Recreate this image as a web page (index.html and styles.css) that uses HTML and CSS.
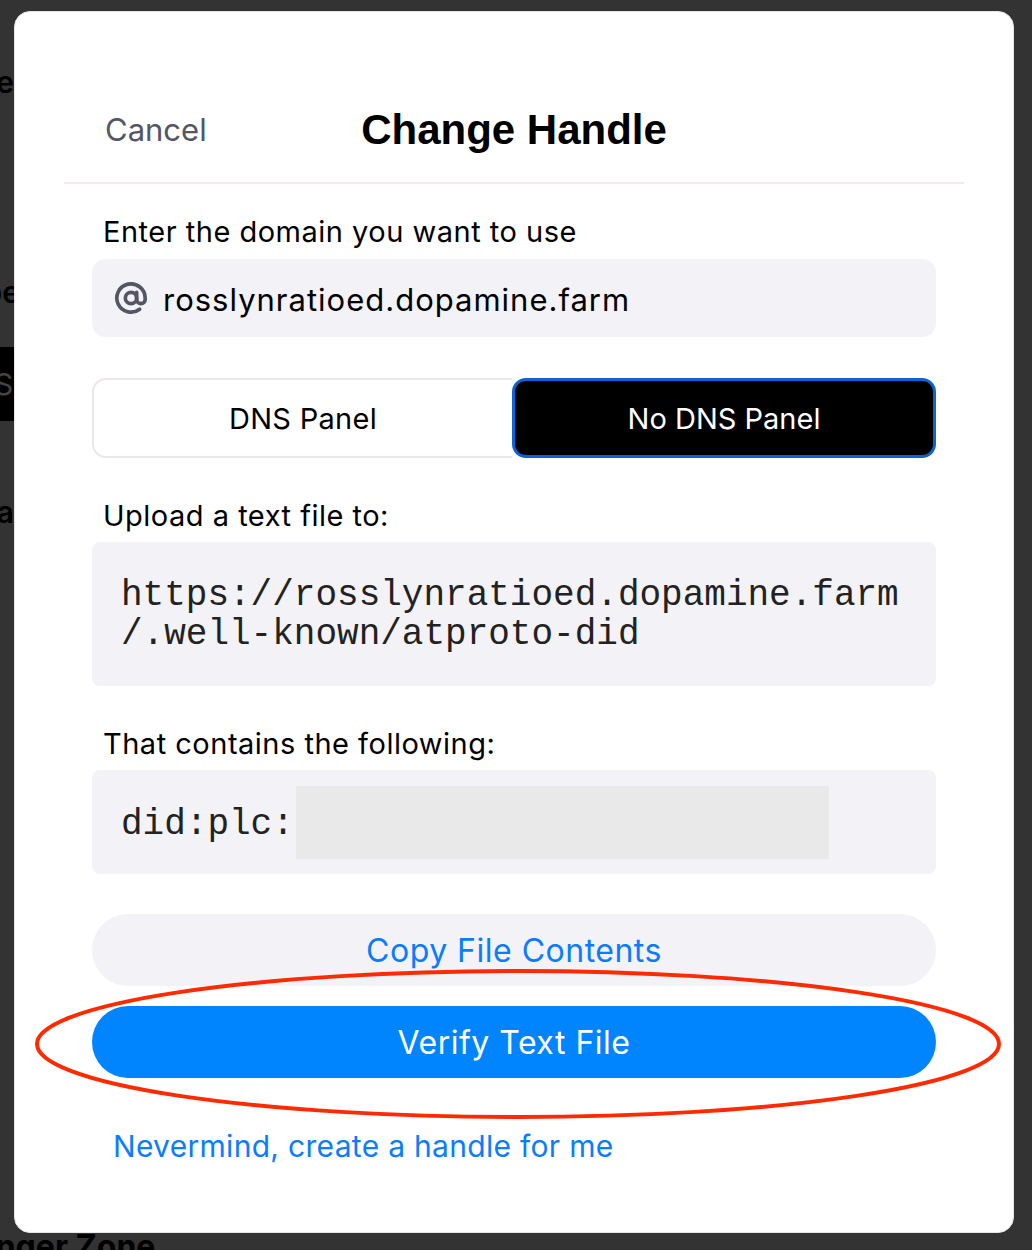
FILE: index.html
```html
<!DOCTYPE html>
<html lang="en">
<head>
<meta charset="utf-8">
<title>Change Handle</title>
<link rel="stylesheet" href="styles.css">
</head>
<body>
<div class="page">
  <div class="side">
    <div class="frag f1"><span>Handle</span></div>
    <div class="frag f2"><span>Type</span></div>
    <div class="frag dark"><span>Sy</span></div>
    <div class="frag f3"><span>Data</span></div>
  </div>
  <div class="danger">Danger Zone</div>
</div>

<div class="modal">
  <div class="header">
    <div class="cancel">Cancel</div>
    <div class="title">Change Handle</div>
    <div></div>
  </div>
  <div class="body">
    <div class="label">Enter the domain you want to use</div>
    <div class="input">
      <svg class="at" viewBox="0 0 24 24" width="34" height="34" fill="none" stroke="#545664" stroke-width="2.6" stroke-linecap="round" stroke-linejoin="round"><circle cx="12" cy="12" r="4"/><path d="M16 8v5a3 3 0 0 0 6 0v-1a10 10 0 1 0-3.92 7.94"/></svg>
      <span class="domain">rosslynratioed.dopamine.farm</span>
    </div>
    <div class="segment">
      <div class="seg seg-off">DNS Panel</div>
      <div class="seg seg-on">No DNS Panel</div>
    </div>
    <div class="label gap-lg">Upload a text file to:</div>
    <div class="code">https://rosslynratioed.dopamine.farm<br>/.well-known/atproto-did</div>
    <div class="label gap-lg">That contains the following:</div>
    <div class="code-row">
      <span class="mono">did:plc:</span>
      <span class="redact"></span>
    </div>
    <div class="btn btn-soft">Copy File Contents</div>
    <div class="btn btn-primary">Verify Text File</div>
    <div class="link">Nevermind, create a handle for me</div>
  </div>
</div>

<svg class="annot" width="1032" height="1250" viewBox="0 0 1032 1250"><ellipse cx="518" cy="1044" rx="481" ry="73" fill="none" stroke="#ff2a00" stroke-width="4"/></svg>
</body>
</html>
```

FILE: styles.css
```css
html, body {
  margin: 0;
  padding: 0;
}
body {
  width: 1032px;
  height: 1250px;
  overflow: hidden;
  background: #333333;
  font-family: Inter, "Noto Sans", sans-serif;
  position: relative;
}
.page {
  display: flex;
  flex-direction: column;
}
.side {
  width: 14px;
  height: 1229px;
  overflow: hidden;
}
.frag {
  display: flex;
  justify-content: flex-end;
  white-space: nowrap;
  font-size: 30px;
  line-height: 30px;
  font-weight: 600;
  color: #000;
}
.f1 { margin-top: 67px; }
.f2 { margin-top: 180px; }
.f2 span { margin-right: -6px; }
.dark {
  margin-top: 40px;
  height: 74px;
  line-height: 74px;
  background: #000;
  color: #444;
  font-weight: 400;
  justify-content: flex-start;
}
.dark span { margin-left: -6px; }
.f3 { margin-top: 76px; }
.danger {
  margin-left: -46px;
  font-size: 32px;
  line-height: 36px;
  font-weight: 700;
  color: #000;
  white-space: nowrap;
}

.modal {
  position: absolute;
  left: 14px;
  top: 11px;
  width: 1000px;
  height: 1222px;
  box-sizing: border-box;
  background: #fff;
  border: 1px solid #e9e4e6;
  border-radius: 16px;
}
.header {
  margin: 0 49px;
  height: 172px;
  box-sizing: border-box;
  padding-top: 93px;
  padding-bottom: 27px;
  border-bottom: 2px solid #efebed;
  display: grid;
  grid-template-columns: 1fr auto 1fr;
  align-items: center;
}
.cancel {
  padding-left: 41px;
  font-size: 31px;
  line-height: 50px;
  color: #545664;
}
.title {
  font-family: "Liberation Sans", Arial, sans-serif;
  font-weight: 700;
  font-size: 42px;
  line-height: 50px;
  color: #000;
}
.body {
  padding: 31px 77px 0;
  display: flex;
  flex-direction: column;
}
.label {
  padding-left: 11px;
  font-size: 29px;
  letter-spacing: 0.5px;
  line-height: 34px;
  color: #000;
}
.gap-lg { margin-top: 41px; }
.input {
  margin-top: 10px;
  height: 78px;
  box-sizing: border-box;
  background: #f2f2f7;
  border-radius: 14px;
  display: flex;
  align-items: center;
  padding-left: 22px;
  gap: 15px;
}
.domain {
  font-size: 31px;
  letter-spacing: 1px;
  color: #000;
  padding-top: 2px;
}
.segment {
  margin-top: 41px;
  height: 80px;
  display: flex;
}
.seg {
  display: flex;
  align-items: center;
  justify-content: center;
  font-size: 29px;
  letter-spacing: 0.3px;
  box-sizing: border-box;
}
.seg-off {
  flex: 1;
  border: 2px solid #ebe7e9;
  border-right: none;
  border-radius: 14px 0 0 14px;
  color: #000;
  background: #fff;
}
.seg-on {
  width: 424px;
  background: #000;
  color: #fff;
  border: 3px solid #0d62d6;
  border-radius: 14px;
  letter-spacing: 0;
}
.code {
  margin-top: 9px;
  background: #f2f2f7;
  border-radius: 8px;
  padding: 34px 29px 32px;
  font-family: "Liberation Mono", "Courier New", monospace;
  font-size: 36px;
  line-height: 39px;
  color: #222;
  white-space: nowrap;
}
.code-row {
  margin-top: 9px;
  height: 104px;
  background: #f2f2f7;
  border-radius: 8px;
  display: flex;
  align-items: center;
  padding-left: 29px;
}
.mono {
  font-family: "Liberation Mono", "Courier New", monospace;
  font-size: 36px;
  color: #222;
  padding-top: 4px;
}
.redact {
  width: 533px;
  height: 73px;
  margin-left: 2px;
  margin-top: 1px;
  background: #e9e9e9;
}
.btn {
  height: 72px;
  border-radius: 36px;
  display: flex;
  align-items: center;
  justify-content: center;
  font-size: 32px;
  letter-spacing: 0.5px;
}
.btn-soft {
  margin-top: 40px;
  background: #f2f2f7;
  color: #0a7cff;
}
.btn-primary {
  margin-top: 20px;
  background: #0085ff;
  color: #fff;
}
.link {
  margin-top: 51px;
  padding-left: 21px;
  font-size: 30px;
  letter-spacing: 0.3px;
  line-height: 34px;
  color: #0a7cff;
}
.annot {
  position: absolute;
  left: 0;
  top: 0;
  pointer-events: none;
}
```
